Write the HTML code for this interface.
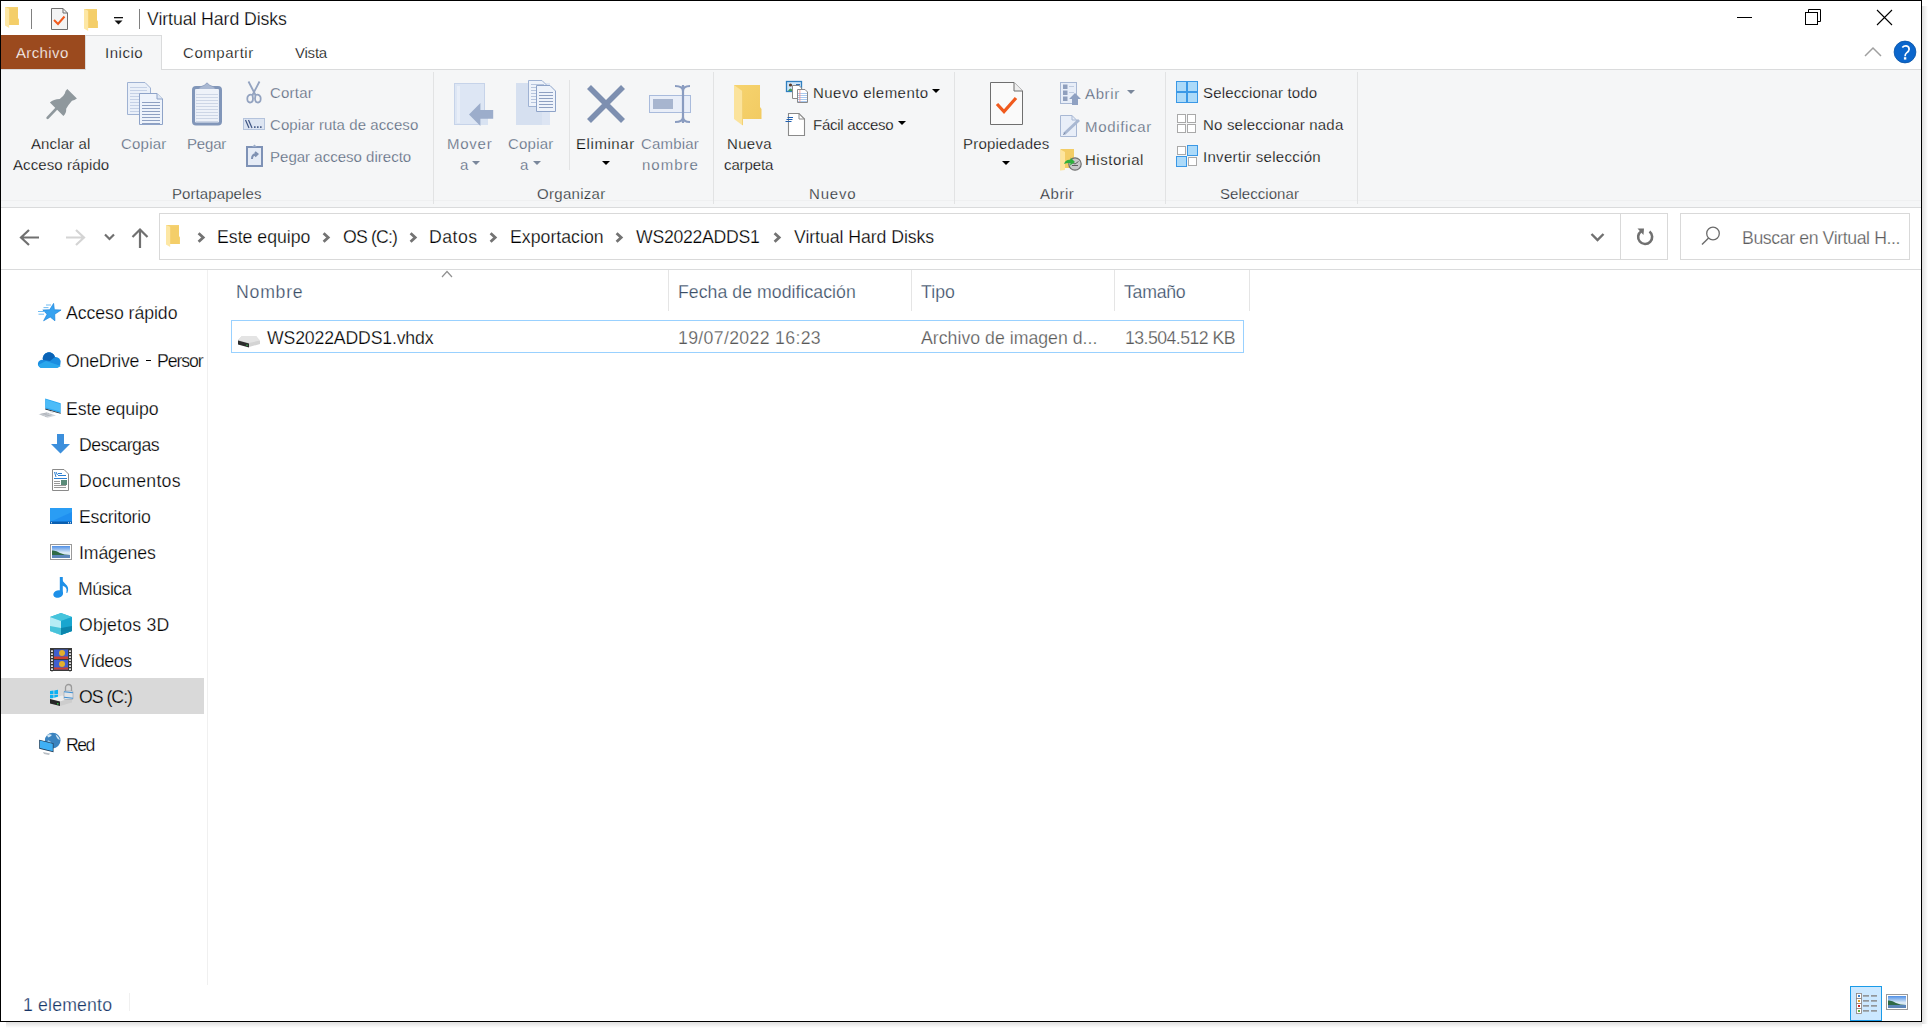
<!DOCTYPE html><html><head><meta charset="utf-8"><title>Virtual Hard Disks</title><style>
html,body{margin:0;padding:0;width:1930px;height:1030px;overflow:hidden;background:#fff;}
body{position:relative;font-family:"Liberation Sans",sans-serif;}
.t{position:absolute;white-space:nowrap;font-family:"Liberation Sans",sans-serif;}
svg{overflow:visible}
</style></head><body><div style="position:absolute;left:0px;top:0px;width:1922px;height:1021px;background:#fff"></div>
<div style="position:absolute;left:1px;top:69px;width:1920px;height:1px;background:#dadbdc"></div>
<div style="position:absolute;left:1px;top:70px;width:1920px;height:137px;background:#f5f6f7"></div>
<div style="position:absolute;left:1px;top:200px;width:1920px;height:1px;background:#eff0f1"></div>
<div style="position:absolute;left:1px;top:207px;width:1920px;height:1px;background:#dadbdc"></div>
<div style="position:absolute;left:1px;top:269px;width:1920px;height:1px;background:#dadbdc"></div>
<svg style="position:absolute;left:5px;top:7px" width="15" height="21" viewBox="0 0 15 21"><path d="M0 0 H13 V11 L14 12.5 V18 H0Z" fill="#f5d272"/><path d="M4 1.5 H13 V18 H4Z" fill="#f2ca62" opacity="0.55"/><path d="M0 0 L4.2 1.8 V21 L0 18.5Z" fill="#fde7a4"/></svg>
<div style="position:absolute;left:31px;top:9px;width:1px;height:20px;background:#808080"></div>
<svg style="position:absolute;left:51px;top:8px" width="17" height="22" viewBox="0 0 17 22"><path d="M0.5 0.5 H12 L16.5 5 V21.5 H0.5Z" fill="#f4f4f4" stroke="#6f6f6f"/><path d="M12 0.5 V5 H16.5" fill="none" stroke="#6f6f6f"/><path d="M3 12 L7 16 L13.5 8.5" fill="none" stroke="#f05a1e" stroke-width="2"/></svg>
<svg style="position:absolute;left:84px;top:9px" width="15" height="22" viewBox="0 0 15 22"><path d="M0 0 H13 V11 L14 12.5 V19 H0Z" fill="#f5d272"/><path d="M4 1.5 H13 V19 H4Z" fill="#f2ca62" opacity="0.55"/><path d="M0 0 L4.2 1.8 V22 L0 19.5Z" fill="#fde7a4"/></svg>
<svg style="position:absolute;left:113px;top:16px" width="11" height="10" viewBox="0 0 11 10"><rect x="1" y="1" width="9" height="1.3" fill="#111"/><path d="M1.5 4.5 H9.5 L5.5 8.5Z" fill="#111"/></svg>
<div style="position:absolute;left:139px;top:9px;width:1px;height:20px;background:#808080"></div>
<div class="t" style="left:147px;top:11.00px;font-size:17.7px;line-height:17.7px;color:#000;letter-spacing:-0.076px;-webkit-text-stroke:0.25px #fff;">Virtual Hard Disks</div>
<div style="position:absolute;left:1737px;top:17px;width:15px;height:1px;background:#000"></div>
<svg style="position:absolute;left:1805px;top:9px" width="17" height="17" viewBox="0 0 17 17"><rect x="0.5" y="3.5" width="12" height="12" fill="none" stroke="#000"/><path d="M3.5 3.5 V0.5 H15.5 V12.5 H12.5" fill="none" stroke="#000"/></svg>
<svg style="position:absolute;left:1876px;top:9px" width="17" height="17" viewBox="0 0 17 17"><path d="M1 1 L16 16 M16 1 L1 16" stroke="#000" stroke-width="1.1"/></svg>
<div style="position:absolute;left:1px;top:35px;width:84px;height:34px;background:#9b4a1e"></div>
<div class="t" style="left:16px;top:45.00px;font-size:15px;line-height:15px;color:#fff;letter-spacing:0.367px;-webkit-text-stroke:0.25px #9b4a1e;">Archivo</div>
<div style="position:absolute;left:85px;top:35px;width:77px;height:35px;background:#f5f6f7;border:1px solid #dadbdc;border-bottom:none;box-sizing:border-box"></div>
<div class="t" style="left:105px;top:45.00px;font-size:15px;line-height:15px;color:#000;letter-spacing:0.520px;-webkit-text-stroke:0.25px #fff;">Inicio</div>
<div class="t" style="left:183px;top:45.00px;font-size:15px;line-height:15px;color:#000;letter-spacing:0.550px;-webkit-text-stroke:0.25px #fff;">Compartir</div>
<div class="t" style="left:295px;top:45.00px;font-size:15px;line-height:15px;color:#000;letter-spacing:-0.225px;-webkit-text-stroke:0.25px #fff;">Vista</div>
<svg style="position:absolute;left:1864px;top:46px" width="18" height="11" viewBox="0 0 18 11"><path d="M1 10 L9 2 L17 10" fill="none" stroke="#a0a0a0" stroke-width="1.5"/></svg>
<svg style="position:absolute;left:1893px;top:40px" width="24" height="24" viewBox="0 0 24 24"><circle cx="12" cy="12" r="10.9" fill="#0b66cc" stroke="#0753a6" stroke-width="0.8"/><path d="M9.3 7.6 Q10.8 5.6 13.2 5.8 Q16.3 6.3 16.1 9.3 Q15.9 11.4 13.6 12.9 Q12.1 13.9 12.1 16.2" fill="none" stroke="#fff" stroke-width="1.7"/><rect x="10.9" y="17.2" width="2.4" height="2.4" fill="#fff"/></svg>
<div style="position:absolute;left:433px;top:72px;width:1px;height:132px;background:#e2e3e4"></div>
<div style="position:absolute;left:713px;top:72px;width:1px;height:132px;background:#e2e3e4"></div>
<div style="position:absolute;left:954px;top:72px;width:1px;height:132px;background:#e2e3e4"></div>
<div style="position:absolute;left:1165px;top:72px;width:1px;height:132px;background:#e2e3e4"></div>
<div style="position:absolute;left:1357px;top:72px;width:1px;height:132px;background:#e2e3e4"></div>
<div style="position:absolute;left:569px;top:80px;width:1px;height:90px;background:#e2e3e4"></div>
<svg style="position:absolute;left:44px;top:86px" width="36" height="36" viewBox="0 0 36 36"><g fill="#8f989d"><path d="M23.3 3 L32.9 12.4 L30.4 14 L28 14.7 Q24.5 18.5 22.2 22.7 Q22.5 27 19.4 29.9 L5.9 16.4 Q9.5 13.2 15.7 12.9 Q19.5 10.5 20.8 7.5 Q21 5 23.3 3 Z"/><path d="M12.5 22.5 L3.6 31.9" stroke="#8f989d" stroke-width="2.6" stroke-linecap="round"/></g></svg>
<div class="t" style="left:31px;top:136.00px;font-size:15px;line-height:15px;color:#000;letter-spacing:0.112px;-webkit-text-stroke:0.25px #f5f6f7;">Anclar al</div>
<div class="t" style="left:13px;top:157.00px;font-size:15px;line-height:15px;color:#000;letter-spacing:0.092px;-webkit-text-stroke:0.25px #f5f6f7;">Acceso rápido</div>
<svg style="position:absolute;left:127px;top:82px" width="37" height="44" viewBox="0 0 37 44"><path d="M0.5 0.5 H18 L23.5 6 V32.5 H0.5Z" fill="#eaf0f9" stroke="#9fb2d3"/><rect x="3" y="5" width="17" height="1" fill="#c5d1e6"/><rect x="3" y="8" width="17" height="1" fill="#c5d1e6"/><rect x="3" y="11" width="17" height="1" fill="#c5d1e6"/><rect x="3" y="14" width="17" height="1" fill="#c5d1e6"/><rect x="3" y="17" width="17" height="1" fill="#c5d1e6"/><rect x="3" y="20" width="17" height="1" fill="#c5d1e6"/><rect x="3" y="23" width="17" height="1" fill="#c5d1e6"/><rect x="3" y="26" width="17" height="1" fill="#c5d1e6"/><rect x="3" y="29" width="17" height="1" fill="#c5d1e6"/><path d="M12.5 11.5 H30 L35.5 17 V42.5 H12.5Z" fill="#eef3fb" stroke="#8ea3c8"/><path d="M30 11.5 V17 H35.5" fill="#dfe7f4" stroke="#8ea3c8"/><rect x="15" y="20" width="18" height="1" fill="#8ea0c2"/><rect x="15" y="23" width="18" height="1" fill="#8ea0c2"/><rect x="15" y="26" width="18" height="1" fill="#8ea0c2"/><rect x="15" y="29" width="18" height="1" fill="#8ea0c2"/><rect x="15" y="32" width="18" height="1" fill="#8ea0c2"/><rect x="15" y="35" width="18" height="1" fill="#8ea0c2"/><rect x="15" y="38" width="18" height="1" fill="#8ea0c2"/><rect x="15" y="41" width="18" height="1" fill="#8ea0c2"/></svg>
<div class="t" style="left:121px;top:136.00px;font-size:15px;line-height:15px;color:#55657b;letter-spacing:0.220px;-webkit-text-stroke:0.25px #f5f6f7;">Copiar</div>
<svg style="position:absolute;left:192px;top:81px" width="31" height="45" viewBox="0 0 31 45"><rect x="1.5" y="6.5" width="27" height="36.5" rx="2.5" fill="#e9eef7" stroke="#8196b9" stroke-width="3"/><path d="M13 4 Q15 0 17 4 L22 6 L24 9 H6 L8 6Z" fill="#a9b8d2" stroke="#8a9cbd" stroke-width="0.8"/><rect x="5" y="8" width="21" height="33" fill="#eef2f9"/><rect x="4" y="13" width="22" height="1" fill="#cdd6e6"/><rect x="4" y="16" width="22" height="1" fill="#cdd6e6"/><rect x="4" y="19" width="22" height="1" fill="#cdd6e6"/><rect x="4" y="22" width="22" height="1" fill="#cdd6e6"/><rect x="4" y="25" width="22" height="1" fill="#cdd6e6"/><rect x="4" y="28" width="22" height="1" fill="#cdd6e6"/><rect x="4" y="31" width="22" height="1" fill="#cdd6e6"/><rect x="4" y="34" width="22" height="1" fill="#cdd6e6"/><rect x="4" y="37" width="22" height="1" fill="#cdd6e6"/><rect x="4" y="40" width="22" height="1" fill="#cdd6e6"/></svg>
<div class="t" style="left:187px;top:136.00px;font-size:15px;line-height:15px;color:#55657b;letter-spacing:-0.175px;-webkit-text-stroke:0.25px #f5f6f7;">Pegar</div>
<svg style="position:absolute;left:245px;top:81px" width="18" height="23" viewBox="0 0 18 23"><g fill="none" stroke="#93a3c0" stroke-width="1.8"><path d="M3.5 0.5 L10.5 14 M14.5 0.5 L7.5 14"/><path d="M7.5 14 Q4 12.5 2.5 16 Q1.5 21 5 21.5 Q8 21.5 8 17.5 Z"/><path d="M10.5 14 Q14 12.5 15.5 16 Q16.5 21 13 21.5 Q10 21.5 10 17.5 Z"/></g></svg>
<div class="t" style="left:270px;top:85.00px;font-size:15px;line-height:15px;color:#55657b;letter-spacing:0.220px;-webkit-text-stroke:0.25px #f5f6f7;">Cortar</div>
<svg style="position:absolute;left:243px;top:118px" width="23" height="13" viewBox="0 0 23 13"><rect x="0.5" y="0.5" width="21" height="11" fill="#dde5f2" stroke="#b4c3dc"/><path d="M2.5 2 L6 10 M5.5 2 L9 10" stroke="#3f5583" stroke-width="1.2"/><rect x="11" y="8.3" width="1.6" height="1.6" fill="#3f5583"/><rect x="14" y="8.3" width="1.6" height="1.6" fill="#3f5583"/><rect x="17" y="8.3" width="1.6" height="1.6" fill="#3f5583"/></svg>
<div class="t" style="left:270px;top:117.00px;font-size:15px;line-height:15px;color:#55657b;letter-spacing:0.075px;-webkit-text-stroke:0.25px #f5f6f7;">Copiar ruta de acceso</div>
<svg style="position:absolute;left:246px;top:144px" width="17" height="23" viewBox="0 0 17 23"><rect x="1" y="3" width="15" height="19" fill="#e6ecf6" stroke="#7e92b6" stroke-width="2"/><path d="M6 3 L8.5 0.5 L11 3Z" fill="#9aabc8"/><path d="M6 15 Q6 10 11 10 M9 8 L11.5 10 L9 12.5" fill="none" stroke="#7f91b2" stroke-width="2"/></svg>
<div class="t" style="left:270px;top:149.00px;font-size:15px;line-height:15px;color:#55657b;letter-spacing:0.016px;-webkit-text-stroke:0.25px #f5f6f7;">Pegar acceso directo</div>
<div class="t" style="left:172px;top:186.00px;font-size:15px;line-height:15px;color:#262a30;letter-spacing:0.091px;-webkit-text-stroke:0.25px #f5f6f7;">Portapapeles</div>
<svg style="position:absolute;left:454px;top:83px" width="40" height="44" viewBox="0 0 40 44"><rect x="0.5" y="0.5" width="30" height="41" fill="#dde6f4" stroke="#c6d3e9"/><rect x="3" y="3" width="3" height="37" fill="#e8eef8"/><rect x="25" y="32" width="9" height="10" fill="#d9e3f2"/><path d="M15 31.4 L26.4 20 V27 H39.2 V35.8 H26.4 V43 Z" fill="#9cadcb"/></svg>
<div class="t" style="left:447px;top:136.00px;font-size:15px;line-height:15px;color:#55657b;letter-spacing:0.750px;-webkit-text-stroke:0.25px #f5f6f7;">Mover</div>
<div class="t" style="left:460px;top:157.00px;font-size:15px;line-height:15px;color:#55657b;-webkit-text-stroke:0.25px #f5f6f7;">a</div>
<svg style="position:absolute;left:472px;top:161px" width="8" height="4" viewBox="0 0 8 4"><path d="M0 0 H8 L4 4Z" fill="#7a879b"/></svg>
<svg style="position:absolute;left:516px;top:80px" width="41" height="46" viewBox="0 0 41 46"><rect x="0" y="3" width="34" height="42" fill="#d6e0f0"/><rect x="26" y="3" width="8" height="42" fill="#dde5f3"/><path d="M12.5 0.5 H26 L31.5 6 V26.5 H12.5Z" fill="#eef3fb" stroke="#9fb2d3"/><rect x="15" y="4" width="13" height="1" fill="#b7c5dd"/><rect x="15" y="7" width="13" height="1" fill="#b7c5dd"/><rect x="15" y="10" width="13" height="1" fill="#b7c5dd"/><rect x="15" y="13" width="13" height="1" fill="#b7c5dd"/><rect x="15" y="16" width="13" height="1" fill="#b7c5dd"/><rect x="15" y="19" width="13" height="1" fill="#b7c5dd"/><rect x="15" y="22" width="13" height="1" fill="#b7c5dd"/><path d="M20.5 5.5 H34 L39.5 11 V31.5 H20.5Z" fill="#eef3fb" stroke="#8ea3c8"/><rect x="23" y="12" width="14" height="1" fill="#8ea0c2"/><rect x="23" y="15" width="14" height="1" fill="#8ea0c2"/><rect x="23" y="18" width="14" height="1" fill="#8ea0c2"/><rect x="23" y="21" width="14" height="1" fill="#8ea0c2"/><rect x="23" y="24" width="14" height="1" fill="#8ea0c2"/><rect x="23" y="27" width="14" height="1" fill="#8ea0c2"/></svg>
<div class="t" style="left:508px;top:136.00px;font-size:15px;line-height:15px;color:#55657b;letter-spacing:0.220px;-webkit-text-stroke:0.25px #f5f6f7;">Copiar</div>
<div class="t" style="left:520px;top:157.00px;font-size:15px;line-height:15px;color:#55657b;-webkit-text-stroke:0.25px #f5f6f7;">a</div>
<svg style="position:absolute;left:533px;top:161px" width="8" height="4" viewBox="0 0 8 4"><path d="M0 0 H8 L4 4Z" fill="#7a879b"/></svg>
<svg style="position:absolute;left:587px;top:85px" width="38" height="38" viewBox="0 0 38 38"><path d="M2 2 L36 36 M36 2 L2 36" stroke="#7d8fb0" stroke-width="5.6"/></svg>
<div class="t" style="left:576px;top:136.00px;font-size:15px;line-height:15px;color:#000;letter-spacing:0.571px;-webkit-text-stroke:0.25px #f5f6f7;">Eliminar</div>
<svg style="position:absolute;left:602px;top:161px" width="8" height="4" viewBox="0 0 8 4"><path d="M0 0 H8 L4 4Z" fill="#000"/></svg>
<svg style="position:absolute;left:649px;top:85px" width="44" height="39" viewBox="0 0 44 39"><rect x="0.5" y="10.5" width="41" height="17" fill="#e9eef8" stroke="#a9bbdc"/><rect x="4" y="14" width="20" height="10" fill="#a7b5cf"/><path d="M34 0 V38 M26 1 Q34 1 34 6 Q34 1 41 1 M26 37 Q34 37 34 32 Q34 37 41 37" fill="none" stroke="#8a9cc0" stroke-width="2.2"/></svg>
<div class="t" style="left:641px;top:136.00px;font-size:15px;line-height:15px;color:#55657b;letter-spacing:0.167px;-webkit-text-stroke:0.25px #f5f6f7;">Cambiar</div>
<div class="t" style="left:642px;top:157.00px;font-size:15px;line-height:15px;color:#55657b;letter-spacing:1.000px;-webkit-text-stroke:0.25px #f5f6f7;">nombre</div>
<div class="t" style="left:537px;top:186.00px;font-size:15px;line-height:15px;color:#262a30;letter-spacing:0.300px;-webkit-text-stroke:0.25px #f5f6f7;">Organizar</div>
<svg style="position:absolute;left:734px;top:85px" width="28" height="41" viewBox="0 0 28 41"><defs><linearGradient id="fg1" x1="0" y1="0" x2="1" y2="1"><stop offset="0" stop-color="#f6d36f"/><stop offset="1" stop-color="#f2cb62"/></linearGradient></defs><path d="M0 0 H26 V22 L27.5 24 V34 H8 L0 34Z" fill="url(#fg1)"/><path d="M0 0 L9 6.5 V40.5 L8 40 L0 34Z" fill="#fbe39c"/><path d="M8.5 6 V40" stroke="#f1cd6a" stroke-width="0.8"/></svg>
<div class="t" style="left:727px;top:136.00px;font-size:15px;line-height:15px;color:#000;letter-spacing:0.300px;-webkit-text-stroke:0.25px #f5f6f7;">Nueva</div>
<div class="t" style="left:724px;top:157.00px;font-size:15px;line-height:15px;color:#000;letter-spacing:-0.117px;-webkit-text-stroke:0.25px #f5f6f7;">carpeta</div>
<svg style="position:absolute;left:785px;top:80px" width="24" height="24" viewBox="0 0 24 24"><rect x="1.5" y="1.5" width="15" height="10" fill="#cfe6f8" stroke="#2f7fc0" stroke-width="1.3"/><circle cx="5.5" cy="5" r="1.6" fill="#5a3a2a"/><path d="M3 11 Q5.5 6 8 11Z" fill="#3f9a5a"/><rect x="11" y="4" width="4" height="1.5" fill="#2f6fb0"/><path d="M7.5 5.5 H14 L16.5 8 V18.5 H7.5Z" fill="#fff" stroke="#8a8a8a"/><path d="M12.5 9.5 H20 L22.5 12 V22.5 H12.5Z" fill="#fff" stroke="#8a8a8a"/><rect x="13" y="13" width="9" height="1" fill="#a9c8ee"/><rect x="13" y="15" width="9" height="1" fill="#a9c8ee"/><rect x="13" y="17" width="9" height="1" fill="#a9c8ee"/><rect x="13" y="19" width="9" height="1" fill="#a9c8ee"/><rect x="13" y="21" width="9" height="1" fill="#a9c8ee"/><rect x="14.5" y="10" width="0.8" height="12" fill="#f08a8a"/></svg>
<div class="t" style="left:813px;top:85.00px;font-size:15px;line-height:15px;color:#000;letter-spacing:0.454px;-webkit-text-stroke:0.25px #f5f6f7;">Nuevo elemento</div>
<svg style="position:absolute;left:932px;top:89px" width="8" height="4" viewBox="0 0 8 4"><path d="M0 0 H8 L4 4Z" fill="#000"/></svg>
<svg style="position:absolute;left:785px;top:113px" width="21" height="23" viewBox="0 0 21 23"><path d="M3.5 0.5 H14 L19.5 6 V22.5 H3.5Z" fill="#fff" stroke="#8a8a8a" stroke-width="1.1"/><path d="M14 0.5 V6 H19.5" fill="none" stroke="#8a8a8a"/><path d="M2.5 4.5 H8 M1.5 6.5 H7.5 M0.5 8.5 H6.5" stroke="#1f5fb0" stroke-width="1.1"/></svg>
<div class="t" style="left:813px;top:117.00px;font-size:15px;line-height:15px;color:#000;letter-spacing:-0.255px;-webkit-text-stroke:0.25px #f5f6f7;">Fácil acceso</div>
<svg style="position:absolute;left:898px;top:121px" width="8" height="4" viewBox="0 0 8 4"><path d="M0 0 H8 L4 4Z" fill="#000"/></svg>
<div class="t" style="left:809px;top:186.00px;font-size:15px;line-height:15px;color:#262a30;letter-spacing:0.800px;-webkit-text-stroke:0.25px #f5f6f7;">Nuevo</div>
<svg style="position:absolute;left:990px;top:82px" width="33" height="44" viewBox="0 0 33 44"><path d="M0.5 0.5 H24 L32.5 9 V42.5 H0.5Z" fill="#fafafa" stroke="#6f6f6f"/><path d="M24 0.5 V9 H32.5" fill="#eee" stroke="#6f6f6f"/><path d="M7 22 L14 29.5 L26 16" fill="none" stroke="#f05a1e" stroke-width="3.2"/></svg>
<div class="t" style="left:963px;top:136.00px;font-size:15px;line-height:15px;color:#000;letter-spacing:0.210px;-webkit-text-stroke:0.25px #f5f6f7;">Propiedades</div>
<svg style="position:absolute;left:1002px;top:161px" width="8" height="4" viewBox="0 0 8 4"><path d="M0 0 H8 L4 4Z" fill="#000"/></svg>
<svg style="position:absolute;left:1060px;top:82px" width="22" height="24" viewBox="0 0 22 24"><rect x="0.5" y="0.5" width="16" height="21" fill="#e8eef8" stroke="#a8b8d4"/><rect x="3" y="2.5" width="4.5" height="4.5" fill="#8f9fbd"/><rect x="3" y="8.5" width="4.5" height="4.5" fill="#8f9fbd"/><rect x="3" y="14.5" width="4.5" height="4.5" fill="#8f9fbd"/><path d="M9 4.5 H14 M9 10.5 H14" stroke="#c0cce0"/><path d="M15 11 L21 17 H18 V23 H12 V17 H9Z" fill="#8fa1c2"/></svg>
<div class="t" style="left:1085px;top:86.00px;font-size:15px;line-height:15px;color:#55657b;letter-spacing:0.625px;-webkit-text-stroke:0.25px #f5f6f7;">Abrir</div>
<svg style="position:absolute;left:1127px;top:90px" width="8" height="4" viewBox="0 0 8 4"><path d="M0 0 H8 L4 4Z" fill="#7a879b"/></svg>
<svg style="position:absolute;left:1060px;top:115px" width="22" height="23" viewBox="0 0 22 23"><path d="M0.5 0.5 H12 L16.5 5 V21.5 H0.5Z" fill="#e8eef8" stroke="#a8b8d4"/><path d="M12 0.5 V5 H16.5" fill="none" stroke="#a8b8d4"/><path d="M4 19 L19 5" stroke="#a9b8d2" stroke-width="3"/><path d="M3.5 20 L5 17.5" stroke="#7a8aa8" stroke-width="1"/></svg>
<div class="t" style="left:1085px;top:119.00px;font-size:15px;line-height:15px;color:#55657b;letter-spacing:0.662px;-webkit-text-stroke:0.25px #f5f6f7;">Modificar</div>
<svg style="position:absolute;left:1060px;top:149px" width="22" height="22" viewBox="0 0 22 22"><path d="M0.5 0 H14 V19 H4 L0.5 21.5Z" fill="#f3cd66"/><path d="M0.5 0.5 L5 3 V21 L0.5 21.5Z" fill="#fde59e"/><circle cx="15" cy="15" r="6.2" fill="#c8c8c8" stroke="#707070" stroke-width="1.2"/><path d="M12 13.5 L15 15 L18.5 12.5 M12 16.5 H18" stroke="#555" stroke-width="0.9" fill="none"/><path d="M4 15 Q6 10 11 11 L10.5 8.5 L15 13 L10 16.5 L10.5 14 Q7 13.5 4 15Z" fill="#2fae3c"/></svg>
<div class="t" style="left:1085px;top:152.00px;font-size:15px;line-height:15px;color:#000;letter-spacing:0.525px;-webkit-text-stroke:0.25px #f5f6f7;">Historial</div>
<div class="t" style="left:1040px;top:186.00px;font-size:15px;line-height:15px;color:#262a30;letter-spacing:0.550px;-webkit-text-stroke:0.25px #f5f6f7;">Abrir</div>
<svg style="position:absolute;left:1176px;top:81px" width="23" height="23" viewBox="0 0 23 23"><rect x="0.5" y="0.5" width="10" height="10" fill="#acdaf9" stroke="#3a98e6"/><rect x="11.5" y="0.5" width="10" height="10" fill="#acdaf9" stroke="#3a98e6"/><rect x="0.5" y="11.5" width="10" height="10" fill="#acdaf9" stroke="#3a98e6"/><rect x="11.5" y="11.5" width="10" height="10" fill="#acdaf9" stroke="#3a98e6"/></svg>
<div class="t" style="left:1203px;top:85.00px;font-size:15px;line-height:15px;color:#000;letter-spacing:0.153px;-webkit-text-stroke:0.25px #f5f6f7;">Seleccionar todo</div>
<svg style="position:absolute;left:1176px;top:113px" width="22" height="22" viewBox="0 0 22 22"><g fill="#fff" stroke="#a9a9a9"><rect x="1.5" y="1.5" width="8" height="8"/><rect x="11.5" y="1.5" width="8" height="8"/><rect x="1.5" y="11.5" width="8" height="8"/><rect x="11.5" y="11.5" width="8" height="8"/></g></svg>
<div class="t" style="left:1203px;top:117.00px;font-size:15px;line-height:15px;color:#000;letter-spacing:0.194px;-webkit-text-stroke:0.25px #f5f6f7;">No seleccionar nada</div>
<svg style="position:absolute;left:1176px;top:145px" width="23" height="23" viewBox="0 0 23 23"><g fill="#fff" stroke="#a9a9a9"><rect x="1.5" y="1.5" width="8" height="8"/><rect x="12.5" y="12.5" width="8" height="8"/></g><rect x="11.5" y="0.5" width="10" height="10" fill="#acdaf9" stroke="#3a98e6"/><rect x="0.5" y="11.5" width="10" height="10" fill="#acdaf9" stroke="#3a98e6"/></svg>
<div class="t" style="left:1203px;top:149.00px;font-size:15px;line-height:15px;color:#000;letter-spacing:0.300px;-webkit-text-stroke:0.25px #f5f6f7;">Invertir selección</div>
<div class="t" style="left:1220px;top:186.00px;font-size:15px;line-height:15px;color:#262a30;letter-spacing:0.050px;-webkit-text-stroke:0.25px #f5f6f7;">Seleccionar</div>
<svg style="position:absolute;left:19px;top:229px" width="21" height="17" viewBox="0 0 21 17"><path d="M10 1 L2 8.5 L10 16 M2 8.5 H20" fill="none" stroke="#707070" stroke-width="2.2"/></svg>
<svg style="position:absolute;left:65px;top:229px" width="21" height="17" viewBox="0 0 21 17"><path d="M11 1 L19 8.5 L11 16 M19 8.5 H1" fill="none" stroke="#d4d4d4" stroke-width="2.2"/></svg>
<svg style="position:absolute;left:104px;top:233px" width="11" height="8" viewBox="0 0 11 8"><path d="M1 1.5 L5.5 6 L10 1.5" fill="none" stroke="#707070" stroke-width="2.2"/></svg>
<svg style="position:absolute;left:131px;top:228px" width="18" height="21" viewBox="0 0 18 21"><path d="M1.5 9 L9 1.5 L16.5 9 M9 1.5 V20" fill="none" stroke="#707070" stroke-width="2.2"/></svg>
<div style="position:absolute;left:159px;top:213px;width:1462px;height:47px;border:1px solid #d9d9d9;box-sizing:border-box;background:#fff"></div>
<div style="position:absolute;left:1620px;top:213px;width:48px;height:47px;border:1px solid #d9d9d9;box-sizing:border-box;background:#fff"></div>
<svg style="position:absolute;left:166px;top:225px" width="15" height="22" viewBox="0 0 15 22"><path d="M0 0 H13 V11 L14 12.5 V19 H0Z" fill="#f5d272"/><path d="M4 1.5 H13 V19 H4Z" fill="#f2ca62" opacity="0.55"/><path d="M0 0 L4.2 1.8 V22 L0 19.5Z" fill="#fde7a4"/></svg>
<svg style="position:absolute;left:197px;top:232px" width="8" height="11" viewBox="0 0 8 11"><path d="M1.6 1.2 L6.2 5.5 L1.6 9.8" fill="none" stroke="#737373" stroke-width="2.8"/></svg>
<svg style="position:absolute;left:322px;top:232px" width="8" height="11" viewBox="0 0 8 11"><path d="M1.6 1.2 L6.2 5.5 L1.6 9.8" fill="none" stroke="#737373" stroke-width="2.8"/></svg>
<svg style="position:absolute;left:409px;top:232px" width="8" height="11" viewBox="0 0 8 11"><path d="M1.6 1.2 L6.2 5.5 L1.6 9.8" fill="none" stroke="#737373" stroke-width="2.8"/></svg>
<svg style="position:absolute;left:489px;top:232px" width="8" height="11" viewBox="0 0 8 11"><path d="M1.6 1.2 L6.2 5.5 L1.6 9.8" fill="none" stroke="#737373" stroke-width="2.8"/></svg>
<svg style="position:absolute;left:615px;top:232px" width="8" height="11" viewBox="0 0 8 11"><path d="M1.6 1.2 L6.2 5.5 L1.6 9.8" fill="none" stroke="#737373" stroke-width="2.8"/></svg>
<svg style="position:absolute;left:773px;top:232px" width="8" height="11" viewBox="0 0 8 11"><path d="M1.6 1.2 L6.2 5.5 L1.6 9.8" fill="none" stroke="#737373" stroke-width="2.8"/></svg>
<div class="t" style="left:217px;top:229.00px;font-size:17.7px;line-height:17.7px;color:#000;-webkit-text-stroke:0.25px #fff;">Este equipo</div>
<div class="t" style="left:343px;top:229.00px;font-size:17.7px;line-height:17.7px;color:#000;letter-spacing:-0.833px;-webkit-text-stroke:0.25px #fff;">OS (C:)</div>
<div class="t" style="left:429px;top:229.00px;font-size:17.7px;line-height:17.7px;color:#000;letter-spacing:0.500px;-webkit-text-stroke:0.25px #fff;">Datos</div>
<div class="t" style="left:510px;top:229.00px;font-size:17.7px;line-height:17.7px;color:#000;letter-spacing:0.020px;-webkit-text-stroke:0.25px #fff;">Exportacion</div>
<div class="t" style="left:636px;top:229.00px;font-size:17.7px;line-height:17.7px;color:#000;letter-spacing:-0.300px;-webkit-text-stroke:0.25px #fff;">WS2022ADDS1</div>
<div class="t" style="left:794px;top:229.00px;font-size:17.7px;line-height:17.7px;color:#000;letter-spacing:-0.059px;-webkit-text-stroke:0.25px #fff;">Virtual Hard Disks</div>
<svg style="position:absolute;left:1590px;top:232px" width="15" height="11" viewBox="0 0 15 11"><path d="M1.5 2 L7.5 8 L13.5 2" fill="none" stroke="#707070" stroke-width="2.4"/></svg>
<svg style="position:absolute;left:1636px;top:228px" width="18" height="18" viewBox="0 0 18 18"><path d="M5.2 3.2 A7 7 0 1 0 13.5 3.5" fill="none" stroke="#707070" stroke-width="2.6"/><path d="M1.5 0.5 L8 0.5 L7.5 7Z" fill="#707070"/></svg>
<div style="position:absolute;left:1680px;top:213px;width:230px;height:47px;border:1px solid #d9d9d9;box-sizing:border-box;background:#fff"></div>
<svg style="position:absolute;left:1701px;top:226px" width="20" height="20" viewBox="0 0 20 20"><circle cx="12" cy="7.5" r="6.3" fill="none" stroke="#6b6b6b" stroke-width="1.3"/><path d="M7.6 12 L1 18.6" stroke="#6b6b6b" stroke-width="1.4"/></svg>
<div class="t" style="left:1742px;top:230.00px;font-size:17.7px;line-height:17.7px;color:#5c5c5c;letter-spacing:-0.395px;-webkit-text-stroke:0.25px #fff;">Buscar en Virtual H...</div>
<div style="position:absolute;left:207px;top:270px;width:1px;height:715px;background:#f0f0f0"></div>
<div style="position:absolute;left:1px;top:678px;width:203px;height:36px;background:#d9d9d9"></div>
<svg style="position:absolute;left:37px;top:303px" width="24" height="19" viewBox="0 0 24 19"><path d="M16.60 0.40 L17.36 6.76 L24.07 7.03 L17.70 11.24 L17.90 17.77 L13.20 14.00 L6.62 17.77 L10.09 11.24 L5.81 7.03 L12.66 6.76Z" fill="#36a2f0" stroke="#1a84dc" stroke-width="0.7" stroke-linejoin="round"/><path d="M9 2 H14 M6.5 4.6 H11.5 M1 8.5 H8 M1.5 11.2 H7" stroke="#5fb4f2" stroke-width="0.9"/></svg>
<div class="t" style="left:66px;top:305.00px;font-size:17.7px;line-height:17.7px;color:#000;letter-spacing:-0.050px;-webkit-text-stroke:0.25px #fff;">Acceso rápido</div>
<svg style="position:absolute;left:37px;top:352px" width="24" height="16" viewBox="0 0 24 16"><path d="M6 8 A6 6 0 0 1 18 5 A5 5 0 0 1 23.5 11 A5 5 0 0 1 19 16 H4 A4 4 0 0 1 6 8Z" fill="#1a8de0"/><path d="M6 8 A6 6 0 0 1 18 5 L13 9 Z" fill="#0b63b6"/><path d="M1 13 L9 9 L24 14 L20 16 H4Z" fill="#2aa7ec"/></svg>
<div class="t" style="left:66px;top:353.00px;font-size:17.7px;line-height:17.7px;color:#000;letter-spacing:-0.186px;-webkit-text-stroke:0.25px #fff;">OneDrive</div>
<div style="position:absolute;left:146px;top:360px;width:5px;height:1.3px;background:#000"></div>
<div style="position:absolute;left:0;top:340px;width:204px;height:40px;overflow:hidden">
<div class="t" style="left:157px;top:13px;font-size:17.7px;line-height:17.7px;color:#000;letter-spacing:-1.1px;-webkit-text-stroke:0.25px #fff">Persor</div>
</div>
<svg style="position:absolute;left:37px;top:398px" width="25" height="21" viewBox="0 0 25 21"><path d="M8.2 0.4 L23.7 5.3 V15 L8.2 10.6Z" fill="#2aa7f0"/><path d="M9 1.6 L23 6 V13.5 L9 9.6Z" fill="#4cbcf8"/><path d="M8.2 10.6 L23.7 15 V15.8 L8.2 11.4Z" fill="#1b2a3a"/><path d="M13 13 L17 14 L16 15 L12.5 14Z" fill="#d7dbe0"/><path d="M1.5 16.2 L10 14.2 L19 17.5 L10.5 19.8Z" fill="#d3d7dc"/><path d="M3.5 16.3 L10 15 M5.5 17.2 L12 15.8 M8 18.3 L14.5 16.8" stroke="#9aa0a8" stroke-width="0.6"/></svg>
<div class="t" style="left:66px;top:401.00px;font-size:17.7px;line-height:17.7px;color:#000;letter-spacing:-0.090px;-webkit-text-stroke:0.25px #fff;">Este equipo</div>
<svg style="position:absolute;left:51px;top:434px" width="20" height="20" viewBox="0 0 20 20"><path d="M6 0 H13 V10 H19 L9.5 19.5 L0 10 H6Z" fill="#3c8fdc"/></svg>
<div class="t" style="left:79px;top:437.00px;font-size:17.7px;line-height:17.7px;color:#000;letter-spacing:-0.488px;-webkit-text-stroke:0.25px #fff;">Descargas</div>
<svg style="position:absolute;left:52px;top:469px" width="18" height="22" viewBox="0 0 18 22"><path d="M0.5 0.5 H12 L16.5 5 V21.5 H0.5Z" fill="#fff" stroke="#8a8a8a"/><path d="M2.5 3 L4 8 M4 3 L5.5 6" stroke="#2b7fd2" stroke-width="1"/><rect x="6" y="4" width="4" height="1" fill="#2b7fd2"/><rect x="6" y="6" width="8" height="1" fill="#2b7fd2"/><rect x="2" y="9" width="13" height="1" fill="#2b7fd2"/><rect x="2" y="12" width="6" height="1" fill="#999"/><rect x="2" y="14" width="6" height="1" fill="#999"/><rect x="2" y="16" width="12" height="1" fill="#999"/><rect x="2" y="18" width="12" height="1" fill="#999"/><rect x="9" y="11" width="6" height="5" fill="#5b8c7a"/></svg>
<div class="t" style="left:79px;top:473.00px;font-size:17.7px;line-height:17.7px;color:#000;letter-spacing:0.244px;-webkit-text-stroke:0.25px #fff;">Documentos</div>
<svg style="position:absolute;left:50px;top:508px" width="22" height="16" viewBox="0 0 22 16"><rect x="0" y="0" width="22" height="16" fill="#1f8ff0"/><path d="M0 0 H22 V4 L0 14Z" fill="#2a9df4"/><rect x="0" y="13.5" width="22" height="2.5" fill="#0a5fb0"/><rect x="1" y="14.3" width="1" height="1" fill="#fff"/><rect x="18" y="14.3" width="1" height="1" fill="#fff"/><rect x="20" y="14.3" width="1" height="1" fill="#fff"/></svg>
<div class="t" style="left:79px;top:509.00px;font-size:17.7px;line-height:17.7px;color:#000;letter-spacing:-0.222px;-webkit-text-stroke:0.25px #fff;">Escritorio</div>
<svg style="position:absolute;left:50px;top:544px" width="22" height="16" viewBox="0 0 22 16"><defs><linearGradient id="sky2" x1="0" y1="0" x2="0" y2="1"><stop offset="0" stop-color="#4f8fe6"/><stop offset="0.55" stop-color="#dbeaf5"/><stop offset="1" stop-color="#c8ddef"/></linearGradient></defs><rect x="0.5" y="0.5" width="21" height="15" fill="#fff" stroke="#9a9a9a"/><rect x="2" y="2" width="18" height="12" fill="url(#sky2)"/><path d="M2 6.5 Q6 6 10 9 Q14 11 20 11 V12 H2Z" fill="#2f6a45"/><rect x="2" y="11" width="18" height="3" fill="#5c86b8"/></svg>
<div class="t" style="left:79px;top:545.00px;font-size:17.7px;line-height:17.7px;color:#000;letter-spacing:-0.129px;-webkit-text-stroke:0.25px #fff;">Imágenes</div>
<svg style="position:absolute;left:53px;top:577px" width="17" height="22" viewBox="0 0 17 22"><path d="M8.3 0 V16" stroke="#1e90e8" stroke-width="3"/><path d="M8 0.5 Q9.5 5 12.5 7 Q16.5 10 14.5 15.5 Q13 17 13.5 14.5 Q14.5 10 9 8.5Z" fill="#1e90e8"/><ellipse cx="5.2" cy="17" rx="5" ry="3.7" fill="#1e90e8" transform="rotate(-18 5.2 17)"/></svg>
<div class="t" style="left:78px;top:581.00px;font-size:17.7px;line-height:17.7px;color:#000;letter-spacing:-0.500px;-webkit-text-stroke:0.25px #fff;">Música</div>
<svg style="position:absolute;left:50px;top:613px" width="22" height="22" viewBox="0 0 22 22"><path d="M11 0 L22 4 V18 L11 22 L0 18 V4Z" fill="#30b5d8"/><path d="M0 4 L11 0 L22 4 L11 8Z" fill="#46c4dc"/><path d="M0 4 L11 8 V22 L0 18Z" fill="#b6ecf5"/><path d="M0 13 L11 15 V22 L0 18Z" fill="#48c3da"/><path d="M22 4 L11 8 V22 L22 18Z" fill="#19a6cf"/><path d="M22 13 L11 15 V22 L22 18Z" fill="#0c86ad"/></svg>
<div class="t" style="left:79px;top:617.00px;font-size:17.7px;line-height:17.7px;color:#000;letter-spacing:0.189px;-webkit-text-stroke:0.25px #fff;">Objetos 3D</div>
<svg style="position:absolute;left:50px;top:648px" width="22" height="23" viewBox="0 0 22 23"><rect x="0" y="0" width="22" height="23" fill="#3a3a3a"/><rect x="1" y="1" width="2" height="21" fill="#ddd"/><rect x="19" y="1" width="2" height="21" fill="#ddd"/><rect x="1" y="1" width="2" height="1.3" fill="#333"/><rect x="19" y="1" width="2" height="1.3" fill="#333"/><rect x="1" y="4" width="2" height="1.3" fill="#333"/><rect x="19" y="4" width="2" height="1.3" fill="#333"/><rect x="1" y="7" width="2" height="1.3" fill="#333"/><rect x="19" y="7" width="2" height="1.3" fill="#333"/><rect x="1" y="10" width="2" height="1.3" fill="#333"/><rect x="19" y="10" width="2" height="1.3" fill="#333"/><rect x="1" y="13" width="2" height="1.3" fill="#333"/><rect x="19" y="13" width="2" height="1.3" fill="#333"/><rect x="1" y="16" width="2" height="1.3" fill="#333"/><rect x="19" y="16" width="2" height="1.3" fill="#333"/><rect x="1" y="19" width="2" height="1.3" fill="#333"/><rect x="19" y="19" width="2" height="1.3" fill="#333"/><rect x="1" y="22" width="2" height="1.3" fill="#333"/><rect x="19" y="22" width="2" height="1.3" fill="#333"/><rect x="4" y="1.5" width="14" height="9.5" fill="#3f5fd0"/><rect x="4" y="12" width="14" height="9.5" fill="#3f5fd0"/><circle cx="12" cy="5" r="3" fill="#e3b02b"/><circle cx="12" cy="16" r="3" fill="#e3b02b"/><rect x="4" y="8.5" width="14" height="2.5" fill="#c94030"/><rect x="4" y="19.5" width="14" height="2" fill="#c94030"/></svg>
<div class="t" style="left:79px;top:653.00px;font-size:17.7px;line-height:17.7px;color:#000;letter-spacing:-0.400px;-webkit-text-stroke:0.25px #fff;">Vídeos</div>
<svg style="position:absolute;left:46px;top:682px" width="30" height="28" viewBox="0 0 30 28"><g fill="#0ab0f2"><path d="M4 9 L7.5 8.5 V12.2 H4Z"/><path d="M8.3 8.4 L12 7.8 V12.2 H8.3Z"/><path d="M4 13 H7.5 V16.8 L4 16.3Z"/><path d="M8.3 13 H12 V17.4 L8.3 16.9Z"/></g><path d="M4 17 L14 19.5 L26 16 L16 13.5Z" fill="#ececec"/><path d="M4 17 L14 19.5 V24 L4 21.5Z" fill="#262626"/><path d="M14 19.5 L26 16 V20.5 L14 24Z" fill="#cdcdcd"/><rect x="11" y="21" width="1.5" height="1.5" fill="#33b040"/><path d="M19.5 9 V5.5 A3 3 0 0 1 25.5 5.5 V9" fill="none" stroke="#9a9a9a" stroke-width="1.3"/><rect x="18" y="9" width="9" height="8.5" rx="1" fill="#e0e4e8" stroke="#9aa3ab" stroke-width="0.6"/><path d="M18 9.8 L27 10.8 M18 15.2 L27 16.2" stroke="#3f8fd2" stroke-width="1.1"/></svg>
<div class="t" style="left:79px;top:689.00px;font-size:17.7px;line-height:17.7px;color:#000;letter-spacing:-1.000px;-webkit-text-stroke:0.25px #d9d9d9;">OS (C:)</div>
<svg style="position:absolute;left:38px;top:732px" width="23" height="24" viewBox="0 0 23 24"><circle cx="14.7" cy="8.6" r="7.8" fill="#3a83bf"/><path d="M9 3 Q12 1.5 14 3 Q12 5 10 5.5Z M17.5 2.5 Q21 4 21.8 8 Q19.5 7.5 18.5 5Z" fill="#cfe6f5"/><path d="M10 8 Q13 9 14 12 Q11 12.5 9 11Z" fill="#8cc4ea"/><path d="M1.2 7.7 L15.5 11.2 V20.2 L1.2 16.7Z" fill="#1f3a55"/><path d="M1.9 8.6 L14.8 11.8 V19.2 L1.9 16Z" fill="#3fb0f5"/><path d="M5 20 L12 21.5 L11 23 L6 22Z" fill="#b9bec4"/></svg>
<div class="t" style="left:66px;top:737.00px;font-size:17.7px;line-height:17.7px;color:#000;letter-spacing:-1.550px;-webkit-text-stroke:0.25px #fff;">Red</div>
<div class="t" style="left:236px;top:284.00px;font-size:17.7px;line-height:17.7px;color:#3a4d66;letter-spacing:0.760px;-webkit-text-stroke:0.25px #fff;">Nombre</div>
<div class="t" style="left:678px;top:284.00px;font-size:17.7px;line-height:17.7px;color:#3a4d66;letter-spacing:0.040px;-webkit-text-stroke:0.25px #fff;">Fecha de modificación</div>
<div class="t" style="left:921px;top:284.00px;font-size:17.7px;line-height:17.7px;color:#3a4d66;letter-spacing:0.067px;-webkit-text-stroke:0.25px #fff;">Tipo</div>
<div class="t" style="left:1124px;top:284.00px;font-size:17.7px;line-height:17.7px;color:#3a4d66;letter-spacing:-0.260px;-webkit-text-stroke:0.25px #fff;">Tamaño</div>
<div style="position:absolute;left:668px;top:270px;width:1px;height:41px;background:#e5e5e5"></div>
<div style="position:absolute;left:911px;top:270px;width:1px;height:41px;background:#e5e5e5"></div>
<div style="position:absolute;left:1114px;top:270px;width:1px;height:41px;background:#e5e5e5"></div>
<div style="position:absolute;left:1249px;top:270px;width:1px;height:41px;background:#e5e5e5"></div>
<svg style="position:absolute;left:441px;top:270px" width="12" height="8" viewBox="0 0 12 8"><path d="M1 7 L6 1.5 L11 7" fill="none" stroke="#909090" stroke-width="1.2"/></svg>
<div style="position:absolute;left:231px;top:320px;width:1013px;height:33px;border:1px solid #99d1ff;box-sizing:border-box"></div>
<svg style="position:absolute;left:237px;top:335px" width="24" height="13" viewBox="0 0 24 13"><path d="M5 1 H19 L23 6 V9 L12 12 L1 9 V5Z" fill="#d4d4d4"/><path d="M1 5 L12 8 L23 5.5 L19 1 H5Z" fill="#e4e4e4"/><path d="M1 5.5 L12 8.5 V12.5 L1 9.5Z" fill="#2c2c2c"/><rect x="9.3" y="9.6" width="1.4" height="1.2" fill="#3cc050"/></svg>
<div class="t" style="left:267px;top:330.00px;font-size:17.7px;line-height:17.7px;color:#000;letter-spacing:-0.173px;-webkit-text-stroke:0.25px #fff;">WS2022ADDS1.vhdx</div>
<div class="t" style="left:678px;top:330.00px;font-size:17.7px;line-height:17.7px;color:#585858;letter-spacing:0.333px;-webkit-text-stroke:0.25px #fff;">19/07/2022 16:23</div>
<div class="t" style="left:921px;top:330.00px;font-size:17.7px;line-height:17.7px;color:#585858;letter-spacing:0.019px;-webkit-text-stroke:0.25px #fff;">Archivo de imagen d...</div>
<div class="t" style="left:1125px;top:330.00px;font-size:17.7px;line-height:17.7px;color:#585858;letter-spacing:-0.542px;-webkit-text-stroke:0.25px #fff;">13.504.512 KB</div>
<div class="t" style="left:23px;top:997.00px;font-size:17.7px;line-height:17.7px;color:#173466;letter-spacing:0.167px;-webkit-text-stroke:0.25px #fff;">1 elemento</div>
<div style="position:absolute;left:129px;top:993px;width:1px;height:18px;background:#f0f0f0"></div>
<div style="position:absolute;left:1850px;top:986px;width:32px;height:35px;background:#cce8ff;border:1px solid #1a9be8;box-sizing:border-box"></div>
<svg style="position:absolute;left:1856px;top:993px" width="22" height="21" viewBox="0 0 22 21"><g fill="#fff" stroke="#8a7f7a" stroke-width="0.8"><rect x="0.5" y="0.5" width="5" height="5"/><rect x="0.5" y="5.5" width="5" height="5"/><rect x="0.5" y="10.5" width="5" height="5"/><rect x="0.5" y="15.5" width="5" height="5"/></g><rect x="2" y="2" width="2" height="2" fill="#3a7fd0"/><rect x="2" y="7" width="2" height="2" fill="#e0a020"/><rect x="2" y="12" width="2" height="2" fill="#d02020"/><rect x="2" y="17" width="2" height="2" fill="#60b040"/><g fill="#7a7470"><rect x="7" y="2.3" width="6" height="1.2"/><rect x="15" y="2.3" width="6" height="1.2"/><rect x="7" y="7.3" width="6" height="1.2"/><rect x="15" y="7.3" width="6" height="1.2"/><rect x="7" y="12.3" width="6" height="1.2"/><rect x="15" y="12.3" width="6" height="1.2"/><rect x="7" y="17.3" width="6" height="1.2"/><rect x="15" y="17.3" width="6" height="1.2"/></g></svg>
<svg style="position:absolute;left:1886px;top:994px" width="22" height="16" viewBox="0 0 22 16"><defs><linearGradient id="sky" x1="0" y1="0" x2="0" y2="1"><stop offset="0" stop-color="#4f8fe6"/><stop offset="0.55" stop-color="#dbeaf5"/><stop offset="1" stop-color="#c8ddef"/></linearGradient></defs><rect x="0.5" y="0.5" width="21" height="15" fill="#fff" stroke="#9a9a9a"/><rect x="2" y="2" width="18" height="12" fill="url(#sky)"/><path d="M2 6.5 Q6 6 10 9 Q14 11 20 11 V12 H2Z" fill="#2f6a45"/><rect x="2" y="11" width="18" height="3" fill="#5c86b8"/></svg>
<div style="position:absolute;left:0px;top:0px;width:1922px;height:1px;background:#000"></div>
<div style="position:absolute;left:0px;top:0px;width:1px;height:1021px;background:#000"></div>
<div style="position:absolute;left:1921px;top:0px;width:1px;height:1022px;background:#000"></div>
<div style="position:absolute;left:0px;top:1021px;width:1922px;height:1px;background:#000"></div>
<div style="position:absolute;left:1922px;top:6px;width:6px;height:1018px;background:linear-gradient(to right, rgba(0,0,0,0.13), rgba(0,0,0,0))"></div>
<div style="position:absolute;left:6px;top:1022px;width:1916px;height:6px;background:linear-gradient(to bottom, rgba(0,0,0,0.13), rgba(0,0,0,0))"></div></body></html>
